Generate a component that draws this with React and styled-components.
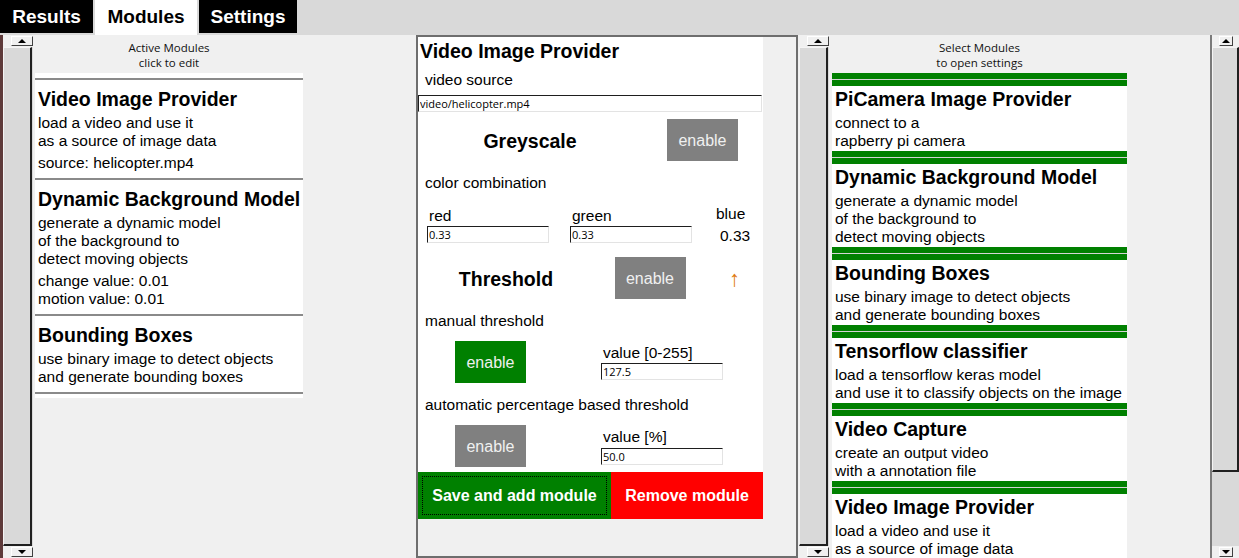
import React from "react";
import styled, { createGlobalStyle } from "styled-components";

const GlobalStyle = createGlobalStyle`
  html, body {
    margin: 0;
    padding: 0;
    background: #f0f0f0;
  }
  body {
    font-family: "Liberation Sans", Arial, sans-serif;
    color: #000;
  }
`;

const Window = styled.div`
  width: 1239px;
  height: 558px;
  display: flex;
  flex-direction: column;
  overflow: hidden;
  background: #f0f0f0;
`;

const TabBar = styled.div`
  height: 35px;
  flex-shrink: 0;
  display: flex;
  align-items: flex-start;
  gap: 2px;
  background: #d9d9d9;
`;

const Tab = styled.div`
  width: ${(p) => p.$w}px;
  height: ${(p) => (p.$active ? 35 : 33)}px;
  display: flex;
  align-items: center;
  justify-content: center;
  padding-bottom: ${(p) => (p.$active ? 2 : 0)}px;
  box-sizing: border-box;
  font-size: 19px;
  font-weight: bold;
  background: ${(p) => (p.$active ? "#ffffff" : "#000000")};
  color: ${(p) => (p.$active ? "#000000" : "#ffffff")};
`;

const Body = styled.div`
  flex: 1;
  min-height: 0;
  display: flex;
  border-left: 3px solid #5e3a3a;
`;

/* scrollbars */
const Scrollbar = styled.div`
  width: ${(p) => p.$w}px;
  margin-left: ${(p) => p.$ml || 0}px;
  flex-shrink: 0;
  display: flex;
  flex-direction: column;
  background: #d9d9d9;
  border-left: ${(p) => (p.$edge ? "2px solid #7a7a7a" : "none")};
`;

const ArrowRow = styled.div`
  height: 12px;
  flex-shrink: 0;
  display: flex;
  align-items: center;
  padding-left: ${(p) => p.$pl}px;
  background: #f0f0f0;
`;

const ArrowButton = styled.div`
  width: ${(p) => p.$w}px;
  height: 10px;
  box-sizing: border-box;
  display: flex;
  align-items: center;
  justify-content: center;
  background: #f0f0f0;
  border: 1px solid;
  border-color: #ffffff #404040 #404040 #ffffff;
  &::after {
    content: "";
    width: 0;
    height: 0;
    border-left: 4px solid transparent;
    border-right: 4px solid transparent;
    ${(p) => (p.$down ? "border-top: 4px solid #000;" : "border-bottom: 4px solid #000;")}
  }
`;

const Thumb = styled.div`
  ${(p) => (p.$h ? `height: ${p.$h}px; flex-shrink: 0;` : "flex: 1;")}
  box-sizing: border-box;
  background: #d9d9d9;
  border-top: 1px solid #f4f4f4;
  border-left: 1px solid #f4f4f4;
  border-right: 2px solid #202020;
  border-bottom: 2px solid #202020;
  margin-right: ${(p) => p.$mr || 0}px;
`;

const Trough = styled.div`
  flex: ${(p) => (p.$open ? 1 : 0)};
  background: #d9d9d9;
`;

/* side lists */
const SidePanel = styled.div`
  width: ${(p) => p.$w}px;
  margin-left: ${(p) => p.$ml}px;
  flex-shrink: 0;
  display: flex;
  flex-direction: column;
  overflow: hidden;
`;

const PanelHeader = styled.div`
  height: 38px;
  flex-shrink: 0;
  box-sizing: border-box;
  padding-top: 5px;
  text-align: center;
  font-family: "Open Sans", "DejaVu Sans", sans-serif;
  font-size: 11.5px;
  line-height: 15px;
  color: #111;
  background: #f0f0f0;
`;

const ActiveList = styled.div`
  background: #ffffff;
  padding: 5px 0 4px;
`;

const ActiveStack = styled.div`
  border-top: 2px solid #8a8a8a;
`;

const ActiveCard = styled.div`
  padding: 7px 3px 6px;
  border-bottom: 2px solid #8a8a8a;
`;

const SelectList = styled.div`
  background: #ffffff;
`;

const GreenBar = styled.div`
  height: 6px;
  background: #008000;
  border-bottom: 1px solid #d4d4d4;
`;

const SelectCard = styled.div`
  padding: 1px 3px 1px;
  border-top: 6px solid #008000;
  border-bottom: 6px solid #008000;
  margin-bottom: 1px;
  background: #ffffff;
  box-shadow: 0 1px 0 #d4d4d4;
`;

const CardTitle = styled.div`
  height: 24px;
  line-height: 24px;
  font-size: 19.5px;
  font-weight: bold;
  white-space: nowrap;
`;

const CardText = styled.div`
  margin-top: ${(p) => p.$mt}px;
  font-size: 15.5px;
  line-height: 18px;
  white-space: nowrap;
`;

/* center editor */
const CenterFrame = styled.div`
  width: 382px;
  margin-left: ${(p) => p.$ml}px;
  flex-shrink: 0;
  box-sizing: border-box;
  border: 2px solid #6e6e6e;
  background: #f0f0f0;
`;

const Form = styled.div`
  width: 345px;
  display: flex;
  flex-direction: column;
  background: #ffffff;
`;

const FormTitle = styled.div`
  height: 26px;
  line-height: 28px;
  padding-left: 2px;
  font-size: 19.5px;
  font-weight: bold;
`;

const Label = styled.div`
  height: 22px;
  line-height: 24px;
  margin-top: ${(p) => p.$mt || 0}px;
  padding-left: ${(p) => p.$pl || 0}px;
  font-size: 15.5px;
  white-space: nowrap;
`;

const Entry = styled.input`
  width: ${(p) => p.$w}px;
  height: 17px;
  margin: ${(p) => p.$mt || 0}px 0 0;
  padding: 0 0 0 1px;
  box-sizing: border-box;
  border: 1px solid;
  border-color: #1e1e1e #e3e3e3 #e3e3e3 #1e1e1e;
  border-radius: 0;
  outline: none;
  font-family: "Open Sans", "DejaVu Sans", sans-serif;
  font-size: 11px;
  color: #000;
  background: #ffffff;
`;

const Row = styled.div`
  display: flex;
  align-items: ${(p) => p.$align || "center"};
  height: ${(p) => (p.$h ? `${p.$h}px` : "auto")};
  margin-top: ${(p) => p.$mt || 0}px;
  padding-left: ${(p) => p.$pl || 0}px;
`;

const Cell = styled.div`
  width: ${(p) => p.$w}px;
  flex-shrink: 0;
  display: flex;
  flex-direction: ${(p) => (p.$col ? "column" : "row")};
  justify-content: ${(p) => (p.$col ? "flex-start" : "center")};
  margin-left: ${(p) => p.$ml || 0}px;
`;

const Heading = styled.div`
  font-size: 19.5px;
  line-height: 24px;
  font-weight: bold;
  padding-top: 2px;
`;

const ToggleButton = styled.div`
  width: 71px;
  height: 42px;
  display: flex;
  align-items: center;
  justify-content: center;
  padding-top: 1px;
  box-sizing: border-box;
  font-size: 16px;
  color: #f0f0f0;
  background: ${(p) => (p.$on ? "#008000" : "#808080")};
`;

const Arrow = styled.div`
  font-size: 22px;
  line-height: 22px;
  color: #e07a10;
  padding-top: 2px;
`;

const Value = styled.div`
  margin-top: ${(p) => p.$mt || 0}px;
  padding-left: ${(p) => p.$pl || 0}px;
  font-size: 15.5px;
  line-height: 18px;
`;

const ActionRow = styled.div`
  display: flex;
  height: 47px;
  margin-top: 5px;
`;

const ActionButton = styled.div`
  width: ${(p) => p.$w}px;
  position: relative;
  display: flex;
  align-items: center;
  justify-content: center;
  font-size: 16px;
  font-weight: bold;
  color: #ffffff;
  background: ${(p) => p.$bg};
`;

const FocusRing = styled.div`
  position: absolute;
  inset: 4px;
  border: 1px dotted #000;
  pointer-events: none;
`;

const Filler = styled.div`
  flex: 1;
`;

const activeModules = [
  {
    title: "Video Image Provider",
    text: ["load a video and use it", "as a source of image data"],
    extra: ["source: helicopter.mp4"],
  },
  {
    title: "Dynamic Background Model",
    text: ["generate a dynamic model", "of the background to", "detect moving objects"],
    extra: ["change value: 0.01", "motion value: 0.01"],
  },
  {
    title: "Bounding Boxes",
    text: ["use binary image to detect objects", "and generate bounding boxes"],
    extra: [],
  },
];

const availableModules = [
  { title: "PiCamera Image Provider", text: ["connect to a", "rapberry pi camera"] },
  {
    title: "Dynamic Background Model",
    text: ["generate a dynamic model", "of the background to", "detect moving objects"],
  },
  { title: "Bounding Boxes", text: ["use binary image to detect objects", "and generate bounding boxes"] },
  {
    title: "Tensorflow classifier",
    text: ["load a tensorflow keras model", "and use it to classify objects on the image"],
  },
  { title: "Video Capture", text: ["create an output video", "with a annotation file"] },
  { title: "Video Image Provider", text: ["load a video and use it", "as a source of image data"] },
];

function Lines({ lines, mt }) {
  if (!lines.length) return null;
  return (
    <CardText $mt={mt}>
      {lines.map((l) => (
        <div key={l}>{l}</div>
      ))}
    </CardText>
  );
}

function ScrollTrack({ w, ml, edge, pl, bw, thumbH, mr }) {
  return (
    <Scrollbar $w={w} $ml={ml} $edge={edge}>
      <ArrowRow $pl={pl}>
        <ArrowButton $w={bw} />
      </ArrowRow>
      <Thumb $h={thumbH} $mr={mr} />
      <Trough $open={!!thumbH} />
      <ArrowRow $pl={pl}>
        <ArrowButton $w={bw} $down />
      </ArrowRow>
    </Scrollbar>
  );
}

export default function App() {
  return (
    <Window>
      <GlobalStyle />
      <TabBar>
        <Tab $w={93}>Results</Tab>
        <Tab $w={102} $active>
          Modules
        </Tab>
        <Tab $w={98}>Settings</Tab>
      </TabBar>

      <Body>
        <ScrollTrack w={30} pl={8} bw={23} mr={1} />

        <SidePanel $w={268} $ml={2}>
          <PanelHeader>
            Active Modules
            <br />
            click to edit
          </PanelHeader>
          <ActiveList>
            <ActiveStack>
              {activeModules.map((m) => (
                <ActiveCard key={m.title}>
                  <CardTitle>{m.title}</CardTitle>
                  <Lines lines={m.text} mt={3} />
                  <Lines lines={m.extra} mt={4} />
                </ActiveCard>
              ))}
            </ActiveStack>
          </ActiveList>
        </SidePanel>

        <CenterFrame $ml={113}>
          <Form>
            <FormTitle>Video Image Provider</FormTitle>
            <Label $mt={5} $pl={7}>
              video source
            </Label>
            <Entry $w={344} $mt={5} readOnly defaultValue="video/helicopter.mp4" />

            <Row $mt={7} $h={42}>
              <Cell $w={224}>
                <Heading>Greyscale</Heading>
              </Cell>
              <Cell $w={121}>
                <ToggleButton>enable</ToggleButton>
              </Cell>
            </Row>

            <Label $mt={10} $pl={7}>
              color combination
            </Label>

            <Row $mt={11} $pl={9} $h={39} $align="flex-start">
              <Cell $w={143} $col>
                <Label $pl={2}>red</Label>
                <Entry $w={122} readOnly defaultValue="0.33" />
              </Cell>
              <Cell $w={143} $col>
                <Label $pl={2}>green</Label>
                <Entry $w={122} readOnly defaultValue="0.33" />
              </Cell>
              <Cell $w={50} $col>
                <Value $pl={3} $mt={1}>
                  blue
                </Value>
                <Value $pl={7} $mt={4}>
                  0.33
                </Value>
              </Cell>
            </Row>

            <Row $mt={14} $h={42}>
              <Cell $w={176}>
                <Heading>Threshold</Heading>
              </Cell>
              <Cell $w={112}>
                <ToggleButton>enable</ToggleButton>
              </Cell>
              <Cell $w={57}>
                <Arrow>↑</Arrow>
              </Cell>
            </Row>

            <Label $mt={10} $pl={7}>
              manual threshold
            </Label>
            <Row $mt={10} $h={42} $align="flex-start">
              <Cell $w={145}>
                <ToggleButton $on>enable</ToggleButton>
              </Cell>
              <Cell $w={122} $ml={38} $col>
                <Label $pl={2}>value [0-255]</Label>
                <Entry $w={122} readOnly defaultValue="127.5" />
              </Cell>
            </Row>

            <Label $mt={10} $pl={7}>
              automatic percentage based threshold
            </Label>
            <Row $mt={10} $h={42} $align="flex-start">
              <Cell $w={145}>
                <ToggleButton>enable</ToggleButton>
              </Cell>
              <Cell $w={122} $ml={38} $col>
                <Label $pl={2}>value [%]</Label>
                <Entry $w={122} $mt={1} readOnly defaultValue="50.0" />
              </Cell>
            </Row>

            <ActionRow>
              <ActionButton $w={193} $bg="#008000">
                Save and add module
                <FocusRing />
              </ActionButton>
              <ActionButton $w={152} $bg="#ff0000">
                Remove module
              </ActionButton>
            </ActionRow>
          </Form>
        </CenterFrame>

        <ScrollTrack w={30} ml={1} pl={8} bw={23} mr={1} />

        <SidePanel $w={295} $ml={3}>
          <PanelHeader>
            Select Modules
            <br />
            to open settings
          </PanelHeader>
          <SelectList>
            <GreenBar />
            {availableModules.map((m, i) => (
              <SelectCard key={m.title + i}>
                <CardTitle>{m.title}</CardTitle>
                <Lines lines={m.text} mt={3} />
              </SelectCard>
            ))}
          </SelectList>
        </SidePanel>

        <Filler />

        <ScrollTrack w={27} edge pl={7} bw={14} thumbH={425} />
      </Body>
    </Window>
  );
}
